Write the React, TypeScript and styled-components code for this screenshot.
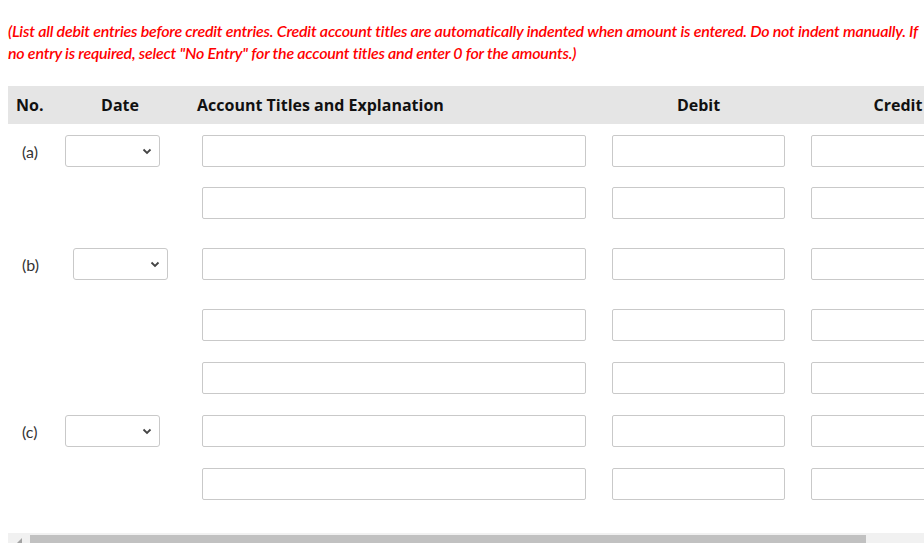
import React from "react";
import styled, { createGlobalStyle } from "styled-components";

const GlobalStyle = createGlobalStyle`
  html, body {
    margin: 0;
    padding: 0;
    background: #fff;
    overflow: hidden;
  }
  body {
    padding: 8px 0 0 8px;
  }
`;

const Page = styled.div`
  width: 916px;
  overflow: hidden;
`;

const Instructions = styled.p`
  margin: 12px 0 22px;
  width: 916px;
  font-family: Lato, "Liberation Sans", sans-serif;
  font-style: italic;
  font-weight: 600;
  font-size: 16px;
  line-height: 22px;
  color: #ff0000;
  letter-spacing: -0.22px;
`;

const Table = styled.div`
  width: 990px;
`;

const Grid = styled.div<{ top?: number }>`
  display: grid;
  grid-template-columns: 49px 126px 416px 199px 200px;
  align-items: center;
  margin-top: ${(p) => p.top ?? 0}px;
`;

const HeaderRow = styled(Grid)`
  height: 38px;
  background: #e5e5e5;
  font-family: "Open Sans", "Liberation Sans", sans-serif;
  font-weight: 700;
  font-size: 16px;
  color: #111;
`;

const HeadCell = styled.div<{ align?: "left" | "center"; pad?: number }>`
  text-align: ${(p) => p.align ?? "center"};
  padding-left: ${(p) => p.pad ?? 0}px;
`;

const Label = styled.div`
  padding-left: 14px;
  font-family: Lato, "Liberation Sans", sans-serif;
  font-size: 16px;
  color: #333;
`;

const Cell = styled.div<{ pad: number }>`
  padding-left: ${(p) => p.pad}px;
  display: flex;
  align-items: center;
`;

const TextBox = styled.input<{ w: number }>`
  box-sizing: border-box;
  width: ${(p) => p.w}px;
  height: 32px;
  border: 1px solid #c9c9c9;
  border-radius: 2px;
  background: #fff;
  padding: 0 6px;
  margin: 0;
  outline: none;
`;

const SelectBox = styled.div`
  box-sizing: border-box;
  width: 95px;
  height: 32px;
  border: 1px solid #c9c9c9;
  border-radius: 3px;
  background: #fff;
  display: flex;
  align-items: center;
  justify-content: flex-end;
  padding-right: 7px;
`;

const ScrollTrack = styled.div`
  margin-top: 33px;
  height: 12px;
  background: #f1f1f1;
  display: flex;
  align-items: flex-start;
  padding-top: 2px;
  box-sizing: border-box;
`;

const ScrollArrow = styled.div`
  width: 22px;
  display: flex;
  justify-content: center;
  padding-top: 3px;
`;

const ScrollThumb = styled.div`
  width: 836px;
  height: 10px;
  background: #c1c1c1;
`;

const Chevron = () => (
  <svg width="10" height="7" viewBox="0 0 10 7">
    <path d="M1.5 1.5 L5 5 L8.5 1.5" fill="none" stroke="#444" strokeWidth="1.8" />
  </svg>
);

type Line = { label?: string; top: number; datePad?: number };

const lines: Line[] = [
  { label: "(a)", top: 11, datePad: 8 },
  { top: 20 },
  { label: "(b)", top: 29, datePad: 16 },
  { top: 29 },
  { top: 21 },
  { label: "(c)", top: 21, datePad: 8 },
  { top: 21 },
];

function EntryRow({ line }: { line: Line }) {
  return (
    <Grid top={line.top}>
      <Label>{line.label ?? ""}</Label>
      <Cell pad={line.datePad ?? 8}>
        {line.label && (
          <SelectBox>
            <Chevron />
          </SelectBox>
        )}
      </Cell>
      <Cell pad={19}>
        <TextBox w={384} />
      </Cell>
      <Cell pad={13}>
        <TextBox w={173} />
      </Cell>
      <Cell pad={13}>
        <TextBox w={173} />
      </Cell>
    </Grid>
  );
}

export default function App() {
  return (
    <Page>
      <GlobalStyle />
      <Instructions>
        (List all debit entries before credit entries. Credit account titles are automatically indented when amount is
        entered. Do not indent manually. If no entry is required, select "No Entry" for the account titles and enter 0 for
        the amounts.)
      </Instructions>
      <Table>
        <HeaderRow>
          <HeadCell align="left" pad={8}>No.</HeadCell>
          <HeadCell>Date</HeadCell>
          <HeadCell align="left" pad={14}>Account Titles and Explanation</HeadCell>
          <HeadCell>Debit</HeadCell>
          <HeadCell>Credit</HeadCell>
        </HeaderRow>
        {lines.map((l, i) => (
          <EntryRow key={i} line={l} />
        ))}
      </Table>
      <ScrollTrack>
        <ScrollArrow>
          <svg width="5" height="5" viewBox="0 0 5 5">
            <path d="M5 0 L5 5 L0 5 Z" fill="#a3a3a3" />
          </svg>
        </ScrollArrow>
        <ScrollThumb />
      </ScrollTrack>
    </Page>
  );
}
